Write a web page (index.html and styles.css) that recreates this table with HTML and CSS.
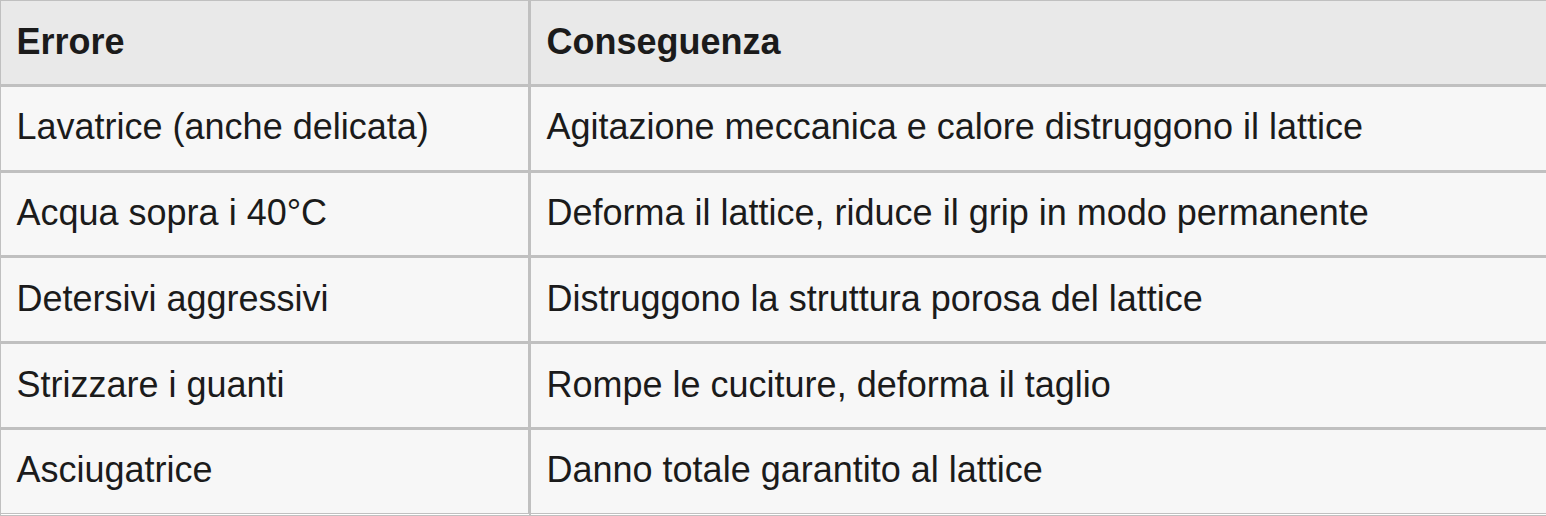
FILE: index.html
```html
<!DOCTYPE html>
<html lang="it">
<head>
<meta charset="utf-8">
<title>Errori e conseguenze</title>
<link rel="stylesheet" href="styles.css">
</head>
<body>
<table class="care-table">
  <colgroup>
    <col class="col-error">
    <col class="col-effect">
  </colgroup>
  <thead>
    <tr>
      <th>Errore</th>
      <th>Conseguenza</th>
    </tr>
  </thead>
  <tbody>
    <tr>
      <td>Lavatrice (anche delicata)</td>
      <td>Agitazione meccanica e calore distruggono il lattice</td>
    </tr>
    <tr>
      <td>Acqua sopra i 40°C</td>
      <td>Deforma il lattice, riduce il grip in modo permanente</td>
    </tr>
    <tr>
      <td>Detersivi aggressivi</td>
      <td>Distruggono la struttura porosa del lattice</td>
    </tr>
    <tr>
      <td>Strizzare i guanti</td>
      <td>Rompe le cuciture, deforma il taglio</td>
    </tr>
    <tr>
      <td>Asciugatrice</td>
      <td>Danno totale garantito al lattice</td>
    </tr>
  </tbody>
</table>
</body>
</html>
```

FILE: styles.css
```css
html, body {
  margin: 0;
  padding: 0;
  background: #ffffff;
  overflow: hidden;
}

.care-table {
  width: 1570px;
  table-layout: fixed;
  border-collapse: separate;
  border-spacing: 0;
  border-top: 1px solid #c0c0c0;
  border-left: 1px solid #c0c0c0;
  font-family: "Liberation Sans", Arial, Helvetica, sans-serif;
  font-size: 36px;
  line-height: 41px;
  color: #1b1b1b;
}

.col-error {
  width: 530px;
}

.care-table th,
.care-table td {
  text-align: left;
  padding: 19.5px 15px 22.25px 15.5px;
  border-right: 3px solid #c0c0c0;
  border-bottom: 3px solid #c0c0c0;
  white-space: nowrap;
}

.care-table th {
  background: #e9e9e9;
  font-weight: bold;
}

.care-table td {
  background: #f7f7f7;
  font-weight: normal;
}

.care-table tbody tr:last-child td {
  border-bottom: 3px double #c0c0c0;
  background-clip: padding-box;
}
```
